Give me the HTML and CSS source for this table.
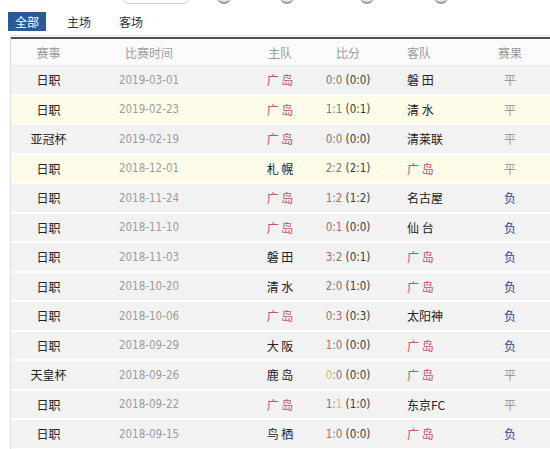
FILE: index.html
```html
<!DOCTYPE html>
<html lang="zh-CN">
<head>
  <meta charset="UTF-8" />
  <meta name="viewport" content="width=device-width, initial-scale=1.0"/>
  <title>广岛 比赛记录</title>
  <link rel="stylesheet" href="styles.css">
</head>
<body>

  <!-- cut-off controls above -->
  <div class="deco">
    <span class="deco-box"></span>
    <span class="dot d1"></span>
    <span class="dot d2"></span>
    <span class="dot d3"></span>
    <span class="dot d4"></span>
  </div>

  <!-- Tabs -->
  <div class="tabs">
    <span class="tab active">全部</span>
    <span class="tab">主场</span>
    <span class="tab">客场</span>
  </div>

  <!-- Match table -->
  <div class="table">
    <div class="row head">
      <span>赛事</span>
      <span class="date">比赛时间</span>
      <span>主队</span>
      <span>比分</span>
      <span class="away">客队</span>
      <span>赛果</span>
    </div>

    <div class="row">
      <span class="league">日职</span><span class="date">2019-03-01</span>
      <span class="team hi">广 岛</span>
      <span class="score">0:0 <b>(0:0)</b></span>
      <span class="team away">磐 田</span><span class="res draw">平</span>
    </div>
    <div class="row yellow">
      <span class="league">日职</span><span class="date">2019-02-23</span>
      <span class="team hi">广 岛</span>
      <span class="score">1:1 <b>(0:1)</b></span>
      <span class="team away">清 水</span><span class="res draw">平</span>
    </div>
    <div class="row">
      <span class="league">亚冠杯</span><span class="date">2019-02-19</span>
      <span class="team hi">广 岛</span>
      <span class="score">0:0 <b>(0:0)</b></span>
      <span class="team away">清莱联</span><span class="res draw">平</span>
    </div>
    <div class="row yellow">
      <span class="league">日职</span><span class="date">2018-12-01</span>
      <span class="team">札 幌</span>
      <span class="score">2:2 <b>(2:1)</b></span>
      <span class="team away hi">广 岛</span><span class="res draw">平</span>
    </div>
    <div class="row">
      <span class="league">日职</span><span class="date">2018-11-24</span>
      <span class="team hi">广 岛</span>
      <span class="score">1:<i>2</i> <b>(1:2)</b></span>
      <span class="team away">名古屋</span><span class="res lose">负</span>
    </div>
    <div class="row">
      <span class="league">日职</span><span class="date">2018-11-10</span>
      <span class="team hi">广 岛</span>
      <span class="score">0:<i>1</i> <b>(0:0)</b></span>
      <span class="team away">仙 台</span><span class="res lose">负</span>
    </div>
    <div class="row">
      <span class="league">日职</span><span class="date">2018-11-03</span>
      <span class="team">磐 田</span>
      <span class="score"><i>3</i>:2 <b>(0:1)</b></span>
      <span class="team away hi">广 岛</span><span class="res lose">负</span>
    </div>
    <div class="row">
      <span class="league">日职</span><span class="date">2018-10-20</span>
      <span class="team">清 水</span>
      <span class="score">2:0 <b>(1:0)</b></span>
      <span class="team away hi">广 岛</span><span class="res lose">负</span>
    </div>
    <div class="row">
      <span class="league">日职</span><span class="date">2018-10-06</span>
      <span class="team hi">广 岛</span>
      <span class="score">0:<i>3</i> <b>(0:3)</b></span>
      <span class="team away">太阳神</span><span class="res lose">负</span>
    </div>
    <div class="row">
      <span class="league">日职</span><span class="date">2018-09-29</span>
      <span class="team">大 阪</span>
      <span class="score"><i>1</i>:0 <b>(0:0)</b></span>
      <span class="team away hi">广 岛</span><span class="res lose">负</span>
    </div>
    <div class="row">
      <span class="league">天皇杯</span><span class="date">2018-09-26</span>
      <span class="team">鹿 岛</span>
      <span class="score"><em>0</em>:0 <b>(0:0)</b></span>
      <span class="team away hi">广 岛</span><span class="res draw">平</span>
    </div>
    <div class="row">
      <span class="league">日职</span><span class="date">2018-09-22</span>
      <span class="team hi">广 岛</span>
      <span class="score">1:<em>1</em> <b>(1:0)</b></span>
      <span class="team away">东京FC</span><span class="res draw">平</span>
    </div>
    <div class="row">
      <span class="league">日职</span><span class="date">2018-09-15</span>
      <span class="team">鸟 栖</span>
      <span class="score"><i>1</i>:0 <b>(0:0)</b></span>
      <span class="team away hi">广 岛</span><span class="res lose">负</span>
    </div>
  </div>

</body>
</html>
```

FILE: styles.css
```css
/* Base */
* { margin:0; padding:0; box-sizing:border-box; }
html, body { background:#fff; }
body {
  width:550px; height:449px; overflow:hidden;
  font-family:"Noto Sans CJK SC", "Noto Sans", sans-serif;
  font-size:12px; color:#222;
}

/* Cut-off controls at the very top */
.deco {
  display:flex; align-items:flex-end;
  height:4px; overflow:hidden;
  padding-left:122px;
}
.deco-box {
  width:68px; height:14px; flex:none;
  border:1px solid #cfcfcf; border-radius:6px;
}
.dot {
  width:14px; height:14px; flex:none;
  border-radius:50%;
  background:#e4e4e4; border-bottom:2px solid #999;
}
.d1 { margin-left:27px; }
.d2 { margin-left:49px; }
.d3 { margin-left:66px; }
.d4 { margin-left:60px; }

/* Tabs */
.tabs {
  display:flex; gap:14px;
  margin-top:8px; padding-left:8px;
}
.tab {
  padding:0 7px; line-height:19px; height:19px;
  color:#333;
}
.tab.active { background:#2b5b95; color:#fff; }

/* Table */
.table {
  margin:4px 0 0 10px;
  border-left:1px solid #dcdcdc;
  border-top:1px solid #e4e4e4;
  padding-top:1px;
}
.row {
  display:grid;
  grid-template-columns:75px 160px 68px 68px 88px 80px;
  align-items:center;
  height:29.5px;
  background:#f2f2f2;
  border-bottom:2px solid #fff;
  text-align:center;
  white-space:nowrap;
}
.row.head {
  height:29px;
  background:#fbfbfb;
  border-top:2px solid #4d4d4d;
  border-bottom:1px solid #ececec;
  color:#9a9a9a;
}
.row.yellow { background:#fcfce8; }

.date {
  padding-right:34px;
  font-family:"DejaVu Sans Condensed", "Liberation Sans", sans-serif;
  font-size:11.5px; color:#9c9c9c;
}
.head .date { font-family:inherit; font-size:12px; }
.league { color:#222; }
.team { color:#222; }
.hi { color:#c2506a; }
.away { text-align:left; padding-left:25px; }

.score {
  font-family:"DejaVu Sans Condensed", "Liberation Sans", sans-serif;
  font-size:11.5px; color:#7c7c7c;
}
.score b { font-weight:normal; color:#3c3c3c; }
.score i { font-style:normal; color:#e2506c; }
.score em { font-style:normal; color:#d4c36a; }

.res.draw { color:#9a9a9a; }
.res.lose { color:#2f3fa0; }
```
